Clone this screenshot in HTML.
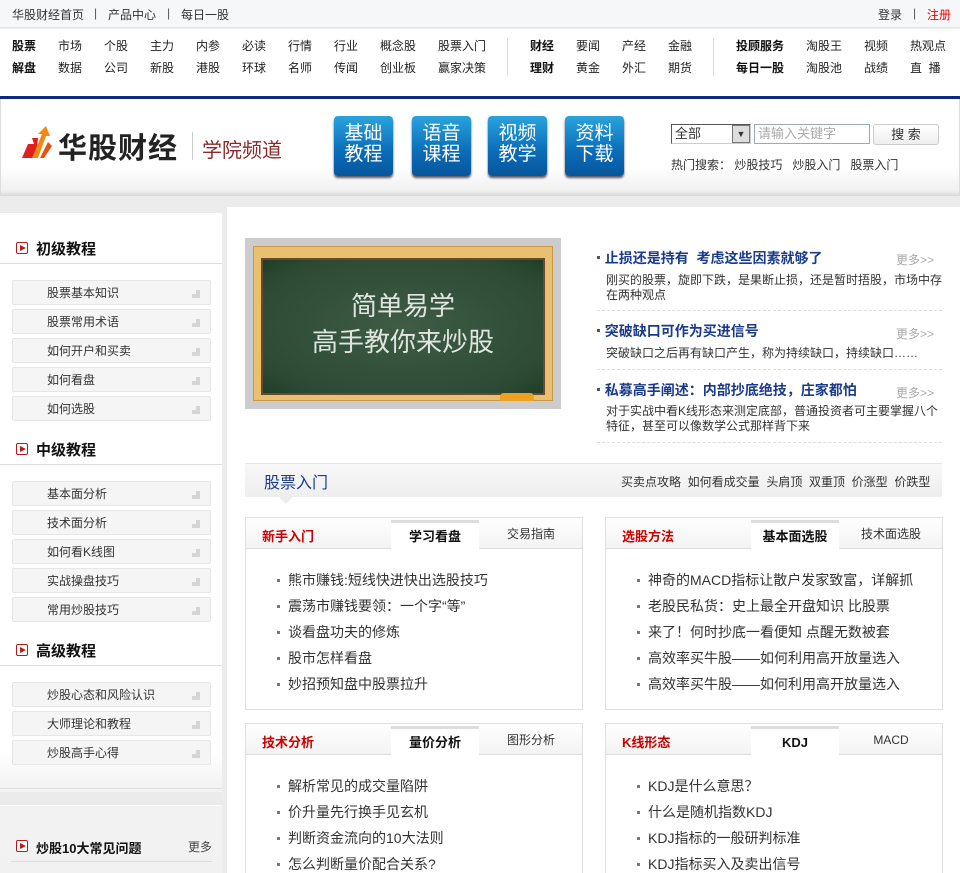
<!DOCTYPE html>
<html style="overflow:hidden;height:873px"><head><meta charset="utf-8">
<style>
*{margin:0;padding:0;box-sizing:border-box}
body{width:960px;height:873px;overflow:hidden;background:#ececec;font-family:"Liberation Sans","Noto Sans CJK SC",sans-serif;font-size:12px;color:#333;position:relative}
.a{position:absolute;white-space:nowrap}
.top{position:absolute;left:0;top:0;width:960px;height:28px;background:#f6f7f9;border-bottom:1px solid #e3e6ea}
.nav{position:absolute;left:0;top:29px;width:960px;height:67px;background:#fff}
.nav span{position:absolute;font-size:12px;color:#222}
.nav b{position:absolute;font-size:12px;color:#111}
.blue{position:absolute;left:0;top:96px;width:960px;height:3px;background:#0c2a84}
.hdr{position:absolute;left:0;top:99px;width:960px;height:97px;background:linear-gradient(#fff 0,#fff 70%,#f0f0f0 95%,#d8d8d8 100%);border-left:1px solid #ddd;border-right:1px solid #ddd}
.btn{position:absolute;top:116px;width:59px;height:60px;border-radius:4px;background:linear-gradient(#2aa3dd,#0a6cb8 60%,#08569a);color:#fff;font-size:19px;line-height:21px;text-align:center;padding-top:7px;box-shadow:0 2px 2px #556}
.side{position:absolute;left:0;top:213px;width:222px;height:660px;background:linear-gradient(#fff 0,#fff 540px,#f3f3f3 572px,#f1f1f1)}
.sh{position:absolute;left:0;width:222px;height:32px;border-bottom:1px solid #ddd}
.sh i{position:absolute;left:16px;top:10px;width:12px;height:12px;border:1px solid #b31b1b;border-radius:2px;background:#fff}
.sh i:after{content:"";position:absolute;left:3px;top:2px;border-left:6px solid #c01818;border-top:3.5px solid transparent;border-bottom:3.5px solid transparent}
.sh b{position:absolute;left:36px;top:6px;font-size:15px;color:#111}
.it{position:absolute;left:12px;width:199px;height:25px;background:#f5f5f5;border:1px solid #e6e6e6;border-radius:2px;font-size:12px;padding-left:34px;line-height:24px;color:#333}
.it:after{content:"";position:absolute;right:10px;top:9px;width:8px;height:8px;background:#d5d5d5;clip-path:polygon(50% 0,100% 0,100% 100%,0 100%,0 50%,50% 50%)}
.main{position:absolute;left:227px;top:207px;width:733px;height:666px;background:#fff}
.nt{position:absolute;left:597px;font-size:14px;font-weight:bold;color:#1a3a8a}
.nt:before{content:"";position:absolute;left:0;top:8px;width:3px;height:3px;background:#555}
.more{position:absolute;left:896px;color:#aaa;font-size:12px}
.nd{position:absolute;left:606px;width:340px;font-size:12px;line-height:15px;color:#333}
.dash{position:absolute;left:597px;width:345px;border-top:1px dashed #ddd}
.box{position:absolute;width:338px;border:1px solid #e0e0e0;background:#fff}
.bh{position:absolute;left:0;top:0;width:336px;height:31px;background:linear-gradient(#fff,#f3f3f3);border-bottom:1px solid #ddd}
.bh b{position:absolute;left:16px;top:8px;color:#c00;font-size:13px}
.t1{position:absolute;left:145px;top:2px;width:88px;height:30px;background:#fff;border-top:3px solid #ddd;text-align:center;font-weight:bold;font-size:13px;line-height:27px;color:#111}
.t2{position:absolute;left:234px;top:2px;width:102px;height:29px;text-align:center;font-size:12px;line-height:29px;color:#333}
.box ul{position:absolute;left:31px;top:49px;list-style:none}
.box li{font-size:14px;line-height:26px;color:#333;position:relative;padding-left:11px}
.box li:before{content:"";position:absolute;left:0;top:12px;width:3px;height:3px;background:#777}
</style></head><body>
<div class="top">
<span class="a" style="left:12px;top:6px">华股财经首页</span>
<span class="a" style="left:94px;top:6px;color:#555">|</span>
<span class="a" style="left:108px;top:6px">产品中心</span>
<span class="a" style="left:167px;top:6px;color:#555">|</span>
<span class="a" style="left:181px;top:6px">每日一股</span>
<span class="a" style="left:878px;top:6px">登录</span>
<span class="a" style="left:913px;top:6px;color:#555">|</span>
<span class="a" style="left:927px;top:6px;color:#e00">注册</span>
</div>
<div class="nav">
<b style="left:12px;top:8px">股票</b><span style="left:58px;top:8px">市场</span><span style="left:104px;top:8px">个股</span><span style="left:150px;top:8px">主力</span><span style="left:196px;top:8px">内参</span><span style="left:242px;top:8px">必读</span><span style="left:288px;top:8px">行情</span><span style="left:334px;top:8px">行业</span><span style="left:380px;top:8px">概念股</span><span style="left:438px;top:8px">股票入门</span>
<b style="left:12px;top:30px">解盘</b><span style="left:58px;top:30px">数据</span><span style="left:104px;top:30px">公司</span><span style="left:150px;top:30px">新股</span><span style="left:196px;top:30px">港股</span><span style="left:242px;top:30px">环球</span><span style="left:288px;top:30px">名师</span><span style="left:334px;top:30px">传闻</span><span style="left:380px;top:30px">创业板</span><span style="left:438px;top:30px">赢家决策</span>
<div class="a" style="left:507px;top:9px;width:1px;height:38px;background:#ddd"></div>
<b style="left:530px;top:8px">财经</b><span style="left:576px;top:8px">要闻</span><span style="left:622px;top:8px">产经</span><span style="left:668px;top:8px">金融</span>
<b style="left:530px;top:30px">理财</b><span style="left:576px;top:30px">黄金</span><span style="left:622px;top:30px">外汇</span><span style="left:668px;top:30px">期货</span>
<div class="a" style="left:713px;top:9px;width:1px;height:38px;background:#ddd"></div>
<b style="left:736px;top:8px">投顾服务</b><span style="left:806px;top:8px">淘股王</span><span style="left:864px;top:8px">视频</span><span style="left:910px;top:8px">热观点</span>
<b style="left:736px;top:30px">每日一股</b><span style="left:806px;top:30px">淘股池</span><span style="left:864px;top:30px">战绩</span><span style="left:910px;top:30px">直&nbsp;&nbsp;播</span>
</div>
<div class="blue"></div>
<div class="hdr"></div>
<svg class="a" style="left:20px;top:124px" width="34" height="36" viewBox="0 0 34 36"><path d="M2 34 L8 20 L14 20 L12 14 L18 14 L16 34 Z" fill="#e02020"/><path d="M12 34 L22 10 L18 10 L26 2 L30 12 L26 12 L18 34 Z" fill="#f08a10"/><path d="M20 34 L28 18 L32 22 L24 34Z" fill="#e85010"/></svg>
<span class="a" style="left:58px;top:125px;font-size:29px;font-weight:bold;color:#222;letter-spacing:1px">华股财经</span>
<div class="a" style="left:192px;top:132px;width:1px;height:28px;background:#ccc"></div>
<span class="a" style="left:202px;top:134px;font-size:20px;color:#8a2a2a">学院频道</span>
<div class="btn" style="left:334px">基础<br>教程</div>
<div class="btn" style="left:412px">语音<br>课程</div>
<div class="btn" style="left:488px">视频<br>教学</div>
<div class="btn" style="left:565px">资料<br>下载</div>
<div class="a" style="left:671px;top:124px;width:80px;height:20px;border:1px solid #555;border-right-color:#ccc;border-bottom-color:#ccc;background:#fff;font-size:13px;padding:1px 3px;line-height:16px">全部<span style="position:absolute;right:0;top:0;width:18px;height:18px;background:#ddd;border:1px solid #777;font-size:9px;text-align:center;line-height:16px">▼</span></div>
<div class="a" style="left:754px;top:124px;width:116px;height:20px;border:1px solid #9ab;font-size:13px;color:#aaa;padding:1px 3px;line-height:16px">请输入关键字</div>
<div class="a" style="left:873px;top:124px;width:66px;height:21px;border:1px solid #ccc;border-radius:3px;background:linear-gradient(#fff,#eee);text-align:center;font-size:13px;line-height:19px">搜&nbsp;索</div>
<span class="a" style="left:671px;top:156px">热门搜索：&nbsp;炒股技巧&nbsp;&nbsp;&nbsp;炒股入门&nbsp;&nbsp;&nbsp;股票入门</span>

<div class="side">
<div class="sh" style="top:19px"><i></i><b>初级教程</b></div>
<div class="it" style="top:67px">股票基本知识</div>
<div class="it" style="top:96px">股票常用术语</div>
<div class="it" style="top:125px">如何开户和买卖</div>
<div class="it" style="top:154px">如何看盘</div>
<div class="it" style="top:183px">如何选股</div>
<div class="sh" style="top:220px"><i></i><b>中级教程</b></div>
<div class="it" style="top:268px">基本面分析</div>
<div class="it" style="top:297px">技术面分析</div>
<div class="it" style="top:326px">如何看K线图</div>
<div class="it" style="top:355px">实战操盘技巧</div>
<div class="it" style="top:384px">常用炒股技巧</div>
<div class="sh" style="top:421px"><i></i><b>高级教程</b></div>
<div class="it" style="top:469px">炒股心态和风险认识</div>
<div class="it" style="top:498px">大师理论和教程</div>
<div class="it" style="top:527px">炒股高手心得</div>
<div class="a" style="left:0;top:575px;width:222px;height:1px;background:#ddd"></div>
<div class="a" style="left:0;top:579px;width:222px;height:13px;background:#ebebeb"></div>
<div class="a" style="left:0;top:592px;width:222px;height:1px;background:#fafafa"></div>
<div class="sh" style="top:617px;left:11px;width:201px;border-bottom:1px solid #ddd;height:32px"><i style="left:5px"></i><b style="left:25px;font-size:13px;top:8px">炒股10大常见问题</b><span style="position:absolute;right:0;top:8px;font-size:12px;color:#444">更多</span></div>
</div>

<div class="main"></div>
<div class="a" style="left:245px;top:238px;width:316px;height:171px;background:#ccc"></div>
<div class="a" style="left:253px;top:246px;width:300px;height:155px;background:#e8c070;border:1px solid #c89a48"></div>
<div class="a" style="left:261px;top:258px;width:284px;height:137px;background:radial-gradient(ellipse at 50% 50%,#3f5c45,#2c4a34 80%,#1f3e28);border:2px solid #6b4a2a"></div>
<div class="a" style="left:500px;top:393px;width:34px;height:8px;background:#f0a020;border-radius:4px 4px 0 0"></div>
<div class="a" style="left:262px;top:288px;width:282px;text-align:center;color:#dfe6df;font-size:26px;line-height:36px;white-space:normal">简单易学<br>高手教你来炒股</div>

<div class="nt" style="top:248px">&nbsp;&nbsp;止损还是持有&nbsp;&nbsp;考虑这些因素就够了</div><span class="more a" style="top:251px">更多&gt;&gt;</span>
<div class="nd" style="top:273px">刚买的股票，旋即下跌，是果断止损，还是暂时捂股，市场中存在两种观点</div>
<div class="dash" style="top:310px"></div>
<div class="nt" style="top:321px">&nbsp;&nbsp;突破缺口可作为买进信号</div><span class="more a" style="top:325px">更多&gt;&gt;</span>
<div class="nd" style="top:346px">突破缺口之后再有缺口产生，称为持续缺口，持续缺口……</div>
<div class="dash" style="top:369px"></div>
<div class="nt" style="top:380px">&nbsp;&nbsp;私募高手阐述：内部抄底绝技，庄家都怕</div><span class="more a" style="top:384px">更多&gt;&gt;</span>
<div class="nd" style="top:404px">对于实战中看K线形态来测定底部，普通投资者可主要掌握八个特征，甚至可以像数学公式那样背下来</div>
<div class="dash" style="top:442px"></div>

<div class="a" style="left:245px;top:463px;width:697px;height:34px;background:linear-gradient(#f8f8f8,#eee);border-top:1px solid #e6e6e6"></div>
<div class="a" style="left:279px;top:497px;border-left:7px solid transparent;border-right:7px solid transparent;border-top:7px solid #eee"></div>
<span class="a" style="left:264px;top:469px;font-size:16px;color:#1a3a8a">股票入门</span>
<span class="a" style="left:621px;top:473px;font-size:12px">买卖点攻略&nbsp;&nbsp;如何看成交量&nbsp;&nbsp;头肩顶&nbsp;&nbsp;双重顶&nbsp;&nbsp;价涨型&nbsp;&nbsp;价跌型</span>

<div class="box" style="left:245px;top:517px;height:193px"><div class="bh"><b>新手入门</b><div class="t1">学习看盘</div><div class="t2">交易指南</div></div>
<ul><li>熊市赚钱:短线快进快出选股技巧</li><li>震荡市赚钱要领：一个字“等”</li><li>谈看盘功夫的修炼</li><li>股市怎样看盘</li><li>妙招预知盘中股票拉升</li></ul></div>
<div class="box" style="left:605px;top:517px;height:193px"><div class="bh"><b>选股方法</b><div class="t1">基本面选股</div><div class="t2">技术面选股</div></div>
<ul><li>神奇的MACD指标让散户发家致富，详解抓</li><li>老股民私货：史上最全开盘知识 比股票</li><li>来了！何时抄底一看便知 点醒无数被套</li><li>高效率买牛股——如何利用高开放量选入</li><li>高效率买牛股——如何利用高开放量选入</li></ul></div>
<div class="box" style="left:245px;top:723px;height:150px;border-bottom:none"><div class="bh"><b>技术分析</b><div class="t1">量价分析</div><div class="t2">图形分析</div></div>
<ul><li>解析常见的成交量陷阱</li><li>价升量先行换手见玄机</li><li>判断资金流向的10大法则</li><li>怎么判断量价配合关系?</li></ul></div>
<div class="box" style="left:605px;top:723px;height:150px;border-bottom:none"><div class="bh"><b>K线形态</b><div class="t1">KDJ</div><div class="t2">MACD</div></div>
<ul><li>KDJ是什么意思？</li><li>什么是随机指数KDJ</li><li>KDJ指标的一般研判标准</li><li>KDJ指标买入及卖出信号</li></ul></div>
</body></html>
